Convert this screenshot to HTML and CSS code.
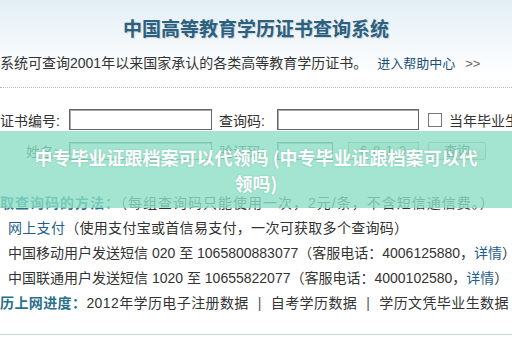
FILE: index.html
```html
<!DOCTYPE html>
<html lang="zh-CN">
<head>
<meta charset="utf-8">
<title>中国高等教育学历证书查询系统</title>
<link rel="stylesheet" href="styles.css">
</head>
<body>
<div class="page">
  <header class="top">
    <h1 class="title">中国高等教育学历证书查询系统</h1>
  </header>
  <p class="intro">系统可查询2001年以来国家承认的各类高等教育学历证书。<a class="help">进入帮助中心<span class="arr">&gt;&gt;</span></a></p>
  <div class="form">
    <div class="row">
      <span class="lbl">证书编号:</span>
      <span class="cell"><span class="input w143"></span></span>
      <span class="lbl2">查询码:</span>
      <span class="cell"><span class="input w142"></span></span>
      <span class="cell last"><span class="check"></span><span class="chk-text">当年毕业生</span></span>
    </div>
    <div class="row row2">
      <span class="lbl">姓名:</span>
      <span class="cell"><span class="input w143 h18"></span></span>
      <span class="lbl2">验证码:</span>
      <span class="cell"><span class="input w56 h18"></span><span class="captcha">6 8 1 0</span></span>
      <span class="cell last"><span class="btn">查询</span></span>
    </div>
  </div>
  <div class="methods">
    <p class="line wide"><b class="hl">取查询码的方法：</b>（每组查询码只能使用一次，2元/条，不含短信通信费。）</p>
    <p class="line ind slight"><a class="link">网上支付</a>（使用支付宝或首信易支付，一次可获取多个查询码）</p>
    <p class="line ind">中国移动用户发送短信 020 至 1065800883077（客服电话：4006125880，<a class="link">详情</a>）</p>
    <p class="line ind">中国联通用户发送短信 1020 至 10655822077（客服电话：4000102580，<a class="link">详情</a>）</p>
    <p class="line mid"><b class="hl">历上网进度：</b>2012年学历电子注册数据<span class="sep">|</span>自考学历数据<span class="sep">|</span>学历文凭毕业生数据</p>
  </div>
  <div class="rule"></div>
  <div class="overlay">
    <p class="ov-title">中专毕业证跟档案可以代领吗 (中专毕业证跟档案可以代领吗)</p>
  </div>
</div>
</body>
</html>
```
FILE: styles.css
```css
* { box-sizing: border-box; }
html, body { margin: 0; padding: 0; }
body {
  width: 512px;
  height: 340px;
  overflow: hidden;
  font-family: "Liberation Sans", "Noto Sans CJK SC", sans-serif;
  color: #333;
  background: #fff;
}
.page {
  position: relative;
  width: 512px;
  height: 340px;
  overflow: hidden;
  background: linear-gradient(180deg, #e2eef5 0px, #f2f7fa 40px, #ffffff 75px);
}
.top {
  padding-top: 15px;
  height: 41px;
}
.title {
  margin: 0;
  text-align: center;
  font-family: "Noto Sans CJK SC", sans-serif;
  font-size: 19px;
  line-height: 26px;
  font-weight: 700;
  color: #2b607e;
  text-shadow: 1px 1px 1px rgba(40, 80, 100, 0.18);
}
.intro {
  margin: 12px 0 0;
  font-size: 14px;
  line-height: 20px;
  padding-bottom: 13px;
  border-bottom: 1px dotted #b8b8b8;
  white-space: nowrap;
  color: #333;
}
.help {
  color: #1d4f7c;
  font-size: 13px;
  margin-left: 10px;
}
.arr {
  margin-left: 10px;
  color: #666;
}
.form {
  margin-top: 21px;
}
.row {
  display: grid;
  grid-template-columns: 69px 150px 58px 151px 1fr;
  align-items: center;
  height: 21px;
  font-size: 14px;
  white-space: nowrap;
}
.row2 {
  margin-top: 11px;
  height: 18px;
}
.lbl {
  text-align: right;
  padding-right: 11px;
}
.cell {
  display: flex;
  align-items: center;
}
.input {
  display: block;
  height: 21px;
  border: 1px solid #666;
  box-shadow: inset 1px 1px 0 #a8a8a8;
  background: #fff;
}
.h18 { height: 18px; }
.w143 { width: 143px; }
.w142 { width: 142px; }
.w56 { width: 56px; }
.check {
  display: block;
  width: 14px;
  height: 14px;
  border: 1px solid #777;
  background: #fff;
}
.chk-text { margin-left: 7px; }
.captcha {
  display: block;
  margin-left: 15px;
  width: 71px;
  height: 18px;
  border: 1px solid #999;
  background: #eef2ee;
  font-size: 13px;
  line-height: 16px;
  text-align: center;
  color: #333;
  letter-spacing: 1px;
}
.btn {
  display: block;
  width: 58px;
  height: 18px;
  border: 1px solid #9a9a9a;
  border-radius: 2px;
  background: linear-gradient(#fafafa, #e2e2e2);
  text-align: center;
  font-size: 13px;
  line-height: 16px;
  color: #333;
}
.methods {
  margin-top: 32px;
}
.line {
  margin: 0;
  height: 25px;
  line-height: 25px;
  font-size: 14px;
  white-space: nowrap;
  color: #333;
}
.wide { letter-spacing: 1px; }
.slight { letter-spacing: 0.3px; }
.mid { letter-spacing: 0.4px; }
.ind { padding-left: 8px; }
.hl {
  color: #2a6f8c;
  font-weight: 700;
}
.link { color: #1f5f92; }
.sep { color: #555; margin: 0 9px; }
.rule {
  margin-top: 18px;
  height: 1px;
  background: #c2d4de;
}
.overlay {
  position: absolute;
  left: 0;
  right: 0;
  top: 131px;
  height: 77px;
  padding: 0 30px;
  display: flex;
  align-items: center;
  justify-content: center;
  background: rgba(140, 222, 196, 0.8);
}
.ov-title {
  margin: 0;
  text-align: center;
  font-family: "Noto Sans CJK SC", sans-serif;
  font-size: 18px;
  line-height: 26px;
  font-weight: 700;
  color: #fff;
  text-shadow: 0 0 2px rgba(60, 120, 100, 0.35);
}
```
